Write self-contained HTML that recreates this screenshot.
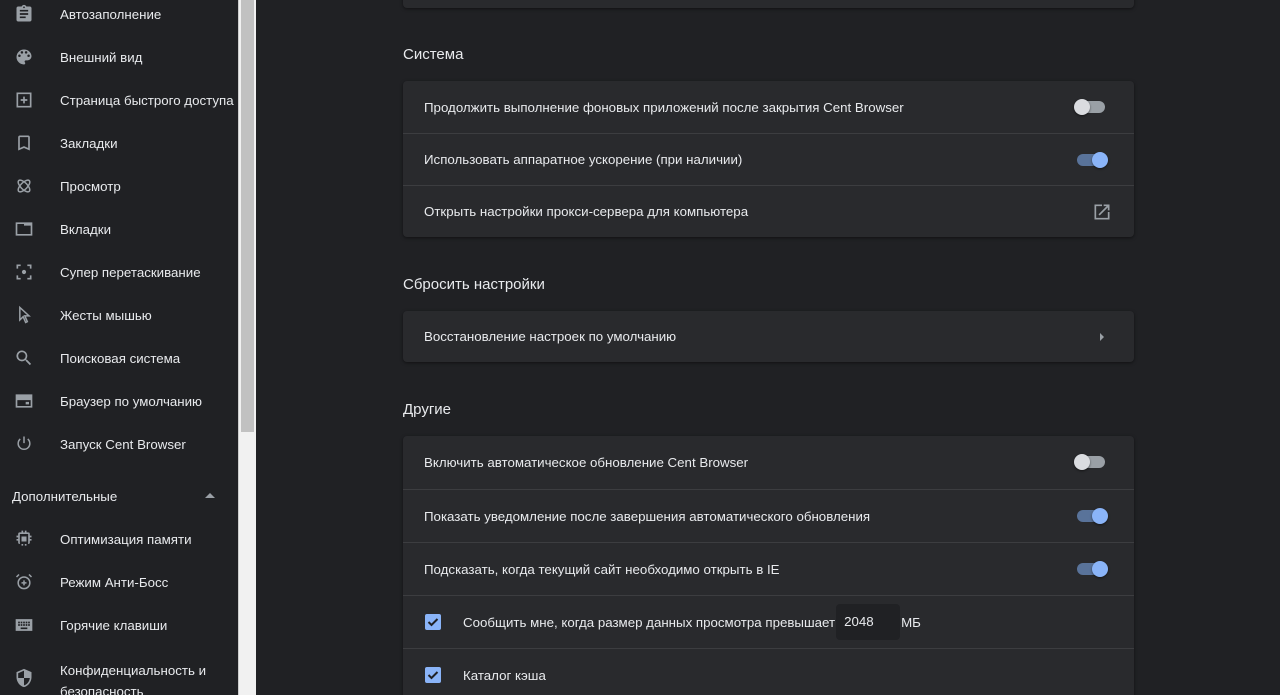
<!DOCTYPE html>
<html><head><meta charset="utf-8"><style>
*{box-sizing:border-box;margin:0;padding:0}
html,body{width:1280px;height:695px;overflow:hidden}
body{background:#202124;font-family:"Liberation Sans",sans-serif;font-size:13.3px;color:#e8eaed;position:relative}
.sb{position:absolute;left:0;top:0;width:238px;height:695px;background:#202124;overflow:hidden}
.it{position:absolute;left:0;height:20px;display:flex;align-items:center}
.it svg{position:absolute;left:14px;width:20px;height:20px;fill:#9aa0a6}
.it svg.o{fill:none;stroke:#9aa0a6;stroke-width:1.8}
.it span{position:absolute;left:60px;white-space:nowrap}
.track{position:absolute;left:238px;top:0;width:18px;height:695px;background:#f1f1f1;border-left:1px solid #ccc}
.thumb{position:absolute;left:241px;top:0;width:13px;height:432px;background:#c1c1c1}
.card{position:absolute;left:403px;width:731px;background:#292a2d;border-radius:4px;box-shadow:0 1px 3px rgba(0,0,0,.5);overflow:hidden}
.row{height:52px;border-top:1px solid #3c3d40;position:relative;display:flex;align-items:center;padding-left:21px}
.c2 .row{height:53px}
.row:first-child{border-top:none}
h2{position:absolute;left:403px;font-size:15px;font-weight:normal;color:#e8eaed}
.tg{position:absolute;right:29px;top:20px;width:28px;height:12px;border-radius:6px;background:#9aa0a6}
.tg i{position:absolute;left:-3px;top:-2px;width:16px;height:16px;border-radius:50%;background:#dadce0;box-shadow:0 1px 2px rgba(0,0,0,.5)}
.tg.on{background:#59739a}.tg.on i{left:15px;background:#8ab4f8}
.cb{width:16px;height:16px;background:#8ab4f8;border-radius:2px;position:absolute;left:22px;top:18px}
.cb svg{width:16px;height:16px}
</style></head><body>
<div class="sb">
<div class="it" style="top:4px"><svg viewBox="0 0 24 24"><path d="M19 3h-4.2C14.4 1.8 13.3 1 12 1s-2.4.8-2.8 2H5c-1.1 0-2 .9-2 2v14c0 1.1.9 2 2 2h14c1.1 0 2-.9 2-2V5c0-1.1-.9-2-2-2zm-7 0c.6 0 1 .4 1 1s-.4 1-1 1-1-.4-1-1 .4-1 1-1zm2 14H7v-2h7v2zm3-4H7v-2h10v2zm0-4H7V7h10v2z"/></svg><span>Автозаполнение</span></div>
<div class="it" style="top:47px"><svg viewBox="0 0 24 24"><path d="M12 3a9 9 0 000 18c.8 0 1.5-.7 1.5-1.5 0-.4-.1-.7-.4-1-.2-.3-.4-.6-.4-1 0-.8.7-1.5 1.5-1.5H16c2.8 0 5-2.2 5-5 0-4.4-4-8-9-8zm-5.5 9a1.5 1.5 0 110-3 1.5 1.5 0 010 3zm3-4a1.5 1.5 0 110-3 1.5 1.5 0 010 3zm5 0a1.5 1.5 0 110-3 1.5 1.5 0 010 3zm3 4a1.5 1.5 0 110-3 1.5 1.5 0 010 3z"/></svg><span>Внешний вид</span></div>
<div class="it" style="top:90px"><svg viewBox="0 0 24 24"><path d="M3 3h18v18H3zm2 2v14h14V5zm6 3h2v3h3v2h-3v3h-2v-3H8v-2h3z"/></svg><span>Страница быстрого доступа</span></div>
<div class="it" style="top:133px"><svg viewBox="0 0 24 24"><path d="M17 3H7c-1.1 0-2 .9-2 2v16l7-3 7 3V5c0-1.1-.9-2-2-2zm0 15l-5-2.2L7 18V5h10v13z"/></svg><span>Закладки</span></div>
<div class="it" style="top:176px"><svg class="o" viewBox="0 0 24 24"><ellipse cx="12" cy="12" rx="9" ry="4" transform="rotate(45 12 12)"/><ellipse cx="12" cy="12" rx="9" ry="4" transform="rotate(-45 12 12)"/></svg><span>Просмотр</span></div>
<div class="it" style="top:219px"><svg viewBox="0 0 24 24"><path d="M2 4h20v16H2zm2 2v12h16V8h-8V6z"/></svg><span>Вкладки</span></div>
<div class="it" style="top:262px"><svg viewBox="0 0 24 24"><path d="M3 3h5v2H5v3H3zm13 0h5v5h-2V5h-3zM3 16h2v3h3v2H3zm16 0h2v5h-5v-2h3z"/><circle cx="12" cy="12" r="2.5"/></svg><span>Супер перетаскивание</span></div>
<div class="it" style="top:305px"><svg class="o" viewBox="0 0 24 24"><path d="M7 3v15l4-4 3 7 2-1-3-7h5z"/></svg><span>Жесты мышью</span></div>
<div class="it" style="top:348px"><svg viewBox="0 0 24 24"><path d="M15.5 14h-.8l-.3-.3A6.5 6.5 0 109.5 16a6.5 6.5 0 004.2-1.6l.3.3v.8l5 5 1.5-1.5-5-5zm-6 0a4.5 4.5 0 110-9 4.5 4.5 0 010 9z"/></svg><span>Поисковая система</span></div>
<div class="it" style="top:391px"><svg viewBox="0 0 24 24"><path d="M2 4h20v16H2zm2 7v7h16v-7zm10 2h4v3h-4z"/></svg><span>Браузер по умолчанию</span></div>
<div class="it" style="top:434px"><svg class="o" viewBox="0 0 24 24"><path d="M12 3v8M7.5 6a7 7 0 109 0"/></svg><span>Запуск Cent Browser</span></div>
<div style="position:absolute;left:12px;top:489px;white-space:nowrap">Дополнительные</div>
<div style="position:absolute;left:205px;top:493px;border:5px solid transparent;border-bottom-color:#9aa0a6;border-top:0"></div>
<div class="it" style="top:529px"><svg viewBox="0 0 24 24"><path d="M9 2h2v2h2V2h2v2h2a2 2 0 012 2v2h2v2h-2v2h2v2h-2v2a2 2 0 01-2 2h-2v2h-2v-2h-2v2H9v-2H7a2 2 0 01-2-2v-2H3v-2h2v-2H3V8h2V6a2 2 0 012-2h2zM7 6v12h10V6zm2 3h6v6H9z"/></svg><span>Оптимизация памяти</span></div>
<div class="it" style="top:572px"><svg class="o" viewBox="0 0 24 24"><circle cx="12" cy="13" r="7"/><path d="M12 10v6M9 13h6M3 6l3-3M21 6l-3-3"/></svg><span>Режим Анти-Босс</span></div>
<div class="it" style="top:615px"><svg viewBox="0 0 24 24"><path d="M2 5h20v14H2zm3 3v2h2V8zm3 0v2h2V8zm3 0v2h2V8zm3 0v2h2V8zm3 0v2h2V8zM5 11v2h2v-2zm3 0v2h2v-2zm3 0v2h2v-2zm3 0v2h2v-2zm3 0v2h2v-2zM8 15v2h8v-2z"/></svg><span>Горячие клавиши</span></div>
<div class="it" style="top:668px"><svg viewBox="0 0 24 24"><path d="M12 1L3 5v6c0 5.5 3.8 10.7 9 12 5.2-1.3 9-6.5 9-12V5zm0 2.2V12H5V6.3zM12 12h7c-.5 4.1-3.2 7.8-7 8.9z"/></svg><span style="top:-8px;line-height:21px">Конфиденциальность и<br>безопасность</span></div>
</div>
<div class="track"></div><div class="thumb"></div>

<div class="card" style="top:-10px;height:18px"></div>
<h2 style="top:46px">Система</h2>
<div class="card" style="top:81px">
<div class="row">Продолжить выполнение фоновых приложений после закрытия Cent Browser<div class="tg"><i></i></div></div>
<div class="row">Использовать аппаратное ускорение (при наличии)<div class="tg on"><i></i></div></div>
<div class="row">Открыть настройки прокси-сервера для компьютера<svg style="position:absolute;right:22px;top:16px" width="20" height="20" viewBox="0 0 24 24" fill="#9aa0a6"><path d="M19 19H5V5h7V3H3v18h18v-9h-2zM14 3v2h3.6l-9.8 9.8 1.4 1.4L19 6.4V10h2V3z"/></svg></div>
</div>
<h2 style="top:276px">Сбросить настройки</h2>
<div class="card" style="top:311px">
<div class="row" style="height:51px">Восстановление настроек по умолчанию<div style="position:absolute;right:30px;top:22px;border:4px solid transparent;border-left-color:#9aa0a6;border-right:0"></div></div>
</div>
<h2 style="top:401px">Другие</h2>
<div class="card c2" style="top:436px;height:270px">
<div class="row">Включить автоматическое обновление Cent Browser<div class="tg"><i></i></div></div>
<div class="row">Показать уведомление после завершения автоматического обновления<div class="tg on"><i></i></div></div>
<div class="row">Подсказать, когда текущий сайт необходимо открыть в IE<div class="tg on"><i></i></div></div>
<div class="row" style="padding-left:60px"><div class="cb"><svg viewBox="0 0 16 16"><path d="M3.5 8l3 3 6-6" stroke="#202124" stroke-width="2" fill="none"/></svg></div>Сообщить мне, когда размер данных просмотра превышает<span style="display:inline-block;background:#202124;border-radius:4px;width:64px;height:36px;line-height:36px;padding-left:8px;margin:0 0 0 1px">2048</span><span style="margin-left:1px">МБ</span></div>
<div class="row" style="padding-left:60px"><div class="cb"><svg viewBox="0 0 16 16"><path d="M3.5 8l3 3 6-6" stroke="#202124" stroke-width="2" fill="none"/></svg></div>Каталог кэша</div>
</div>
</body></html>
